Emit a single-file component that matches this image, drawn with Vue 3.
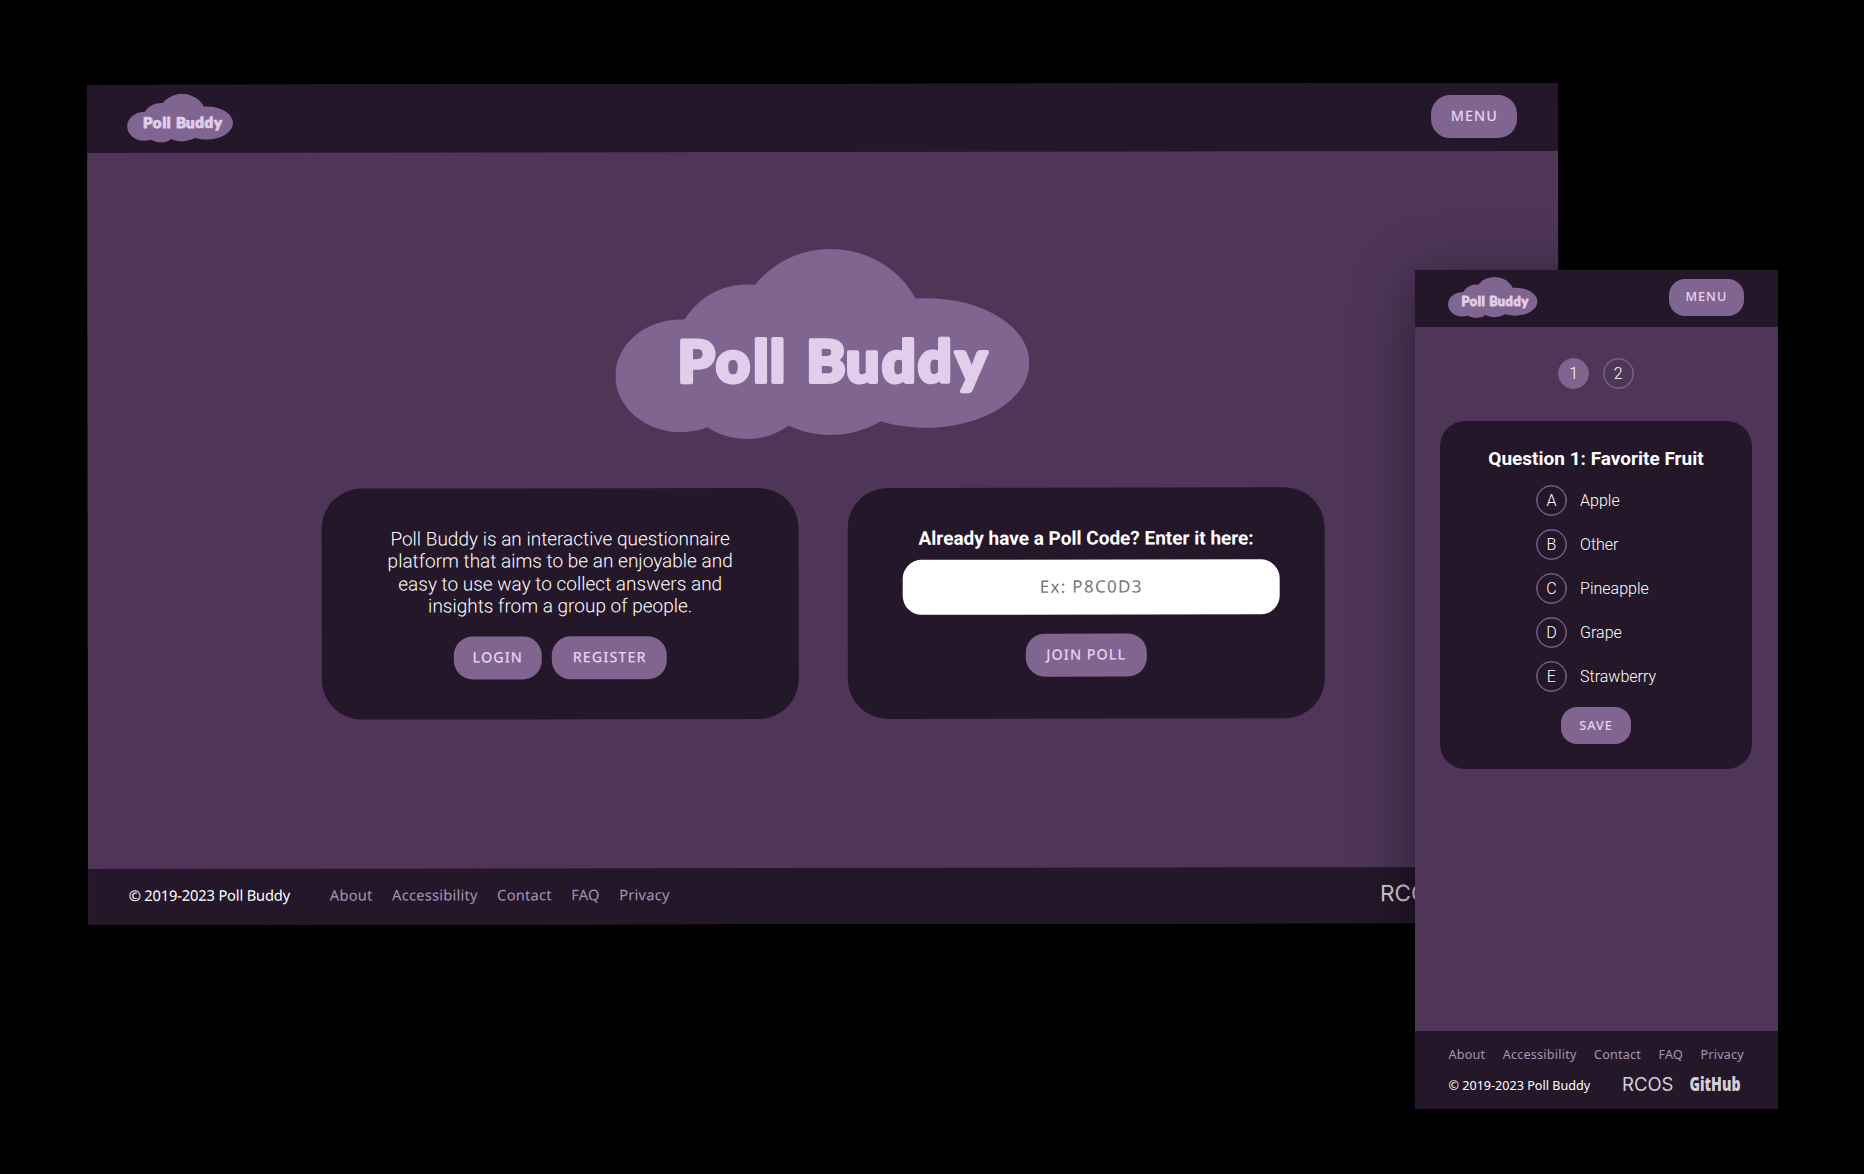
<script setup>
import { h } from 'vue'

const links = ['About', 'Accessibility', 'Contact', 'FAQ', 'Privacy']
const options = [
  { letter: 'A', label: 'Apple' },
  { letter: 'B', label: 'Other' },
  { letter: 'C', label: 'Pineapple' },
  { letter: 'D', label: 'Grape' },
  { letter: 'E', label: 'Strawberry' },
]

const lobes = [
  [275, 437, 197, 169],
  [472, 395, 223, 232],
  [724, 336, 288, 279],
  [1010, 399.5, 310, 194.5],
]

const stretch = 1.02
const glyphStarts = [265, 380, 492, 542, 612, 651, 770, 878, 986, 1098]

const CloudLogo = () =>
  h('svg', { viewBox: '78 57 1242 570', style: { display: 'block' } }, [
    ...lobes.map(([cx, cy, rx, ry]) => h('ellipse', { cx, cy, rx, ry, fill: '#816591' })),
    h(
      'text',
      {
        transform: `scale(${stretch} 1)`,
        x: glyphStarts.map((x) => (x / stretch).toFixed(1)).join(' '),
        y: 456,
        fill: '#e0ceea',
        stroke: '#e0ceea',
        'stroke-width': 12,
        'stroke-linejoin': 'round',
        'font-family': 'Lato, sans-serif',
        'font-weight': 900,
        'font-size': 173,
      },
      'Poll Buddy'
    ),
  ])
</script>

<template>
  <div class="stage">
    <section class="window desktop">
      <header class="bar">
        <CloudLogo class="logo" />
        <button class="btn menu">MENU</button>
      </header>
      <main class="home">
        <CloudLogo class="hero" />
        <div class="cards">
          <article class="card">
            <p class="intro">
              Poll Buddy is an interactive questionnaire<br />platform that aims to be an enjoyable and<br />easy
              to use way to collect answers and<br />insights from a group of people.
            </p>
            <div class="actions">
              <button class="btn login">LOGIN</button>
              <button class="btn register">REGISTER</button>
            </div>
          </article>
          <article class="card">
            <h2 class="title">Already have a Poll Code? Enter it here:</h2>
            <input class="code" type="text" placeholder="Ex: P8C0D3" />
            <button class="btn join">JOIN POLL</button>
          </article>
        </div>
      </main>
      <footer class="foot">
        <span class="copy">© 2019-2023 Poll Buddy</span>
        <nav class="links">
          <a v-for="l in links" :key="l">{{ l }}</a>
        </nav>
        <svg class="rcos" viewBox="0 0 50 16">
          <text x="-1" y="14.5" textLength="51.5" lengthAdjust="spacingAndGlyphs">RCOS</text>
        </svg>
      </footer>
    </section>

    <section class="window phone">
      <header class="bar">
        <CloudLogo class="logo" />
        <button class="btn menu">MENU</button>
      </header>
      <main class="poll">
        <div class="pager">
          <span class="dot active">1</span>
          <span class="dot">2</span>
        </div>
        <article class="question">
          <h2 class="title">Question 1: Favorite Fruit</h2>
          <ul class="options">
            <li v-for="o in options" :key="o.letter">
              <span class="dot">{{ o.letter }}</span>
              <span>{{ o.label }}</span>
            </li>
          </ul>
          <button class="btn save">SAVE</button>
        </article>
      </main>
      <footer class="foot">
        <nav class="links">
          <a v-for="l in links" :key="l">{{ l }}</a>
        </nav>
        <div class="legal">
          <span class="copy">© 2019-2023 Poll Buddy</span>
          <svg class="rcos" viewBox="0 0 50 16">
            <text x="-1" y="14.5" textLength="51.5" lengthAdjust="spacingAndGlyphs">RCOS</text>
          </svg>
          <svg class="github" viewBox="0 0 50 16">
            <text x="-0.5" y="14.5" textLength="51" lengthAdjust="spacingAndGlyphs">GitHub</text>
          </svg>
        </div>
      </footer>
    </section>
  </div>
</template>

<style>
body {
  margin: 0;
  background: #000;
}
</style>

<style scoped>
.stage {
  position: relative;
  width: 1864px;
  height: 1174px;
  overflow: hidden;
  background: #000;
  font-family: Roboto, sans-serif;
  color: #fff;
}
.window {
  position: absolute;
  display: flex;
  flex-direction: column;
  background: #4f3659;
}
.desktop {
  left: 87px;
  top: 85px;
  width: 1471px;
  height: 840px;
  transform: rotate(-0.08deg);
  transform-origin: 0 0;
}
.phone {
  left: 1415px;
  top: 270px;
  width: 363px;
  height: 839px;
  box-shadow: 0 10px 58px rgba(0, 0, 0, 0.48);
}
.bar {
  display: flex;
  align-items: center;
  justify-content: space-between;
  background: #25172a;
  box-sizing: border-box;
}
.desktop .bar {
  height: 67.5px;
  padding: 0 40.8px 0 40px;
}
.phone .bar {
  height: 56.5px;
  padding: 0 34.3px 1.6px 33.3px;
}
.desktop .logo {
  width: 106px;
  height: 48.6px;
}
.phone .logo {
  width: 89.5px;
  height: 41px;
}
.btn {
  display: block;
  border: 0;
  padding: 0 0 1.6px;
  height: 43px;
  border-radius: 19px;
  background: #816591;
  color: #e6d5ef;
  font: 500 14.4px 'Noto Sans', sans-serif;
  letter-spacing: 1px;
  text-align: center;
}
.desktop .menu {
  width: 86px;
}
.login {
  width: 88.6px;
}
.register {
  width: 115px;
}
.join {
  width: 121px;
}
.phone .btn {
  height: 37px;
  border-radius: 16px;
  font-size: 12.6px;
}
.phone .menu {
  width: 74.7px;
}
.phone .save {
  width: 69.5px;
  margin-top: 14.5px;
  padding-bottom: 0;
}
.home {
  flex: 1;
  display: flex;
  flex-direction: column;
  align-items: center;
  padding-top: 97.3px;
}
.hero {
  width: 414px;
  height: 190px;
  margin-right: 0.6px;
}
.cards {
  display: flex;
  gap: 49.5px;
  margin-top: 49.6px;
}
.card {
  width: 476.5px;
  height: 231px;
  box-sizing: border-box;
  padding: 40px 50px 0;
  border-radius: 40px;
  background: #25172a;
  display: flex;
  flex-direction: column;
  align-items: center;
}
.intro {
  margin: 0;
  font-weight: 300;
  font-size: 19px;
  line-height: 22.1px;
  text-align: center;
  white-space: nowrap;
}
.actions {
  display: flex;
  gap: 10px;
  margin-top: 19.5px;
}
.title {
  margin: 0;
  font-weight: 700;
  font-size: 19px;
  line-height: 22.1px;
  white-space: nowrap;
}
.code {
  box-sizing: border-box;
  width: 377px;
  height: 54.4px;
  margin: 9.8px 0 19.5px 10px;
  flex: none;
  border: 0;
  padding: 0 0 1px;
  border-radius: 19px;
  background: #fff;
  text-align: center;
  font: 400 17px 'Noto Sans', sans-serif;
  letter-spacing: 1.3px;
}
.code::placeholder {
  color: #757575;
  opacity: 1;
}
.foot {
  background: #25172a;
  box-sizing: border-box;
  font-family: 'Noto Sans', sans-serif;
}
.links {
  display: flex;
  color: #a892b6;
  letter-spacing: 0.22px;
}
.desktop .foot {
  display: flex;
  align-items: center;
  height: 56.5px;
  padding: 0 117px 4px 40.5px;
  font-size: 14.7px;
}
.desktop .copy {
  letter-spacing: -0.17px;
}
.desktop .links {
  gap: 19.4px;
  margin-left: 39.8px;
}
.rcos,
.github {
  overflow: visible;
}
.rcos text {
  font: 400 18.3px Inter, sans-serif;
  fill: #d4cfd6;
}
.github text {
  font: 800 18.5px 'Open Sans', sans-serif;
  fill: #d4cfd6;
}
.desktop .rcos {
  width: 61px;
  height: 20px;
  margin-left: auto;
}
.poll {
  flex: 1;
  padding: 31.5px 26px 0 25px;
}
.pager {
  display: flex;
  justify-content: center;
  gap: 13.6px;
}
.dot {
  width: 31px;
  height: 31px;
  box-sizing: border-box;
  border: 1px solid #816591;
  box-shadow: inset 0 0 0 0.5px #816591;
  border-radius: 50%;
  display: flex;
  align-items: center;
  justify-content: center;
  font-weight: 300;
  font-size: 16px;
}
.active {
  background: #816591;
}
.question {
  margin-top: 32.2px;
  height: 348px;
  box-sizing: border-box;
  padding-top: 27px;
  border-radius: 25px;
  background: #25172a;
  display: flex;
  flex-direction: column;
  align-items: center;
}
.options {
  list-style: none;
  margin: 14.8px 0 0;
  padding: 0;
  display: flex;
  flex-direction: column;
  gap: 13px;
  font-weight: 300;
  font-size: 16px;
}
.options li {
  display: flex;
  align-items: center;
  gap: 13.2px;
}
.phone .foot {
  height: 78.3px;
  padding: 15px 34px 0 33.5px;
  font-size: 12.6px;
  line-height: 18px;
}
.phone .links {
  justify-content: space-between;
}
.legal {
  display: flex;
  align-items: center;
  margin-top: 12.8px;
}
.phone .rcos {
  width: 50px;
  height: 16px;
  margin: -3px 0 0 auto;
}
.github {
  width: 50px;
  height: 16px;
  margin: -3px 4.3px 0 16.7px;
}
</style>
